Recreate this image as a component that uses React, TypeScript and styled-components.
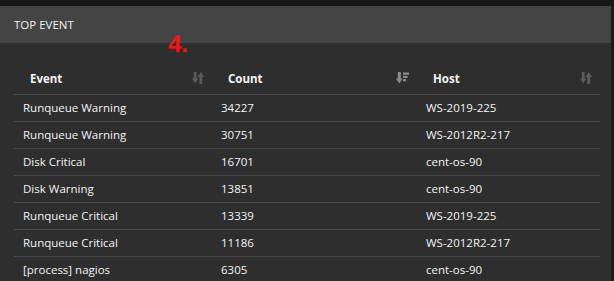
import React from "react";
import styled, { createGlobalStyle } from "styled-components";

const Global = createGlobalStyle`
  html, body { margin: 0; padding: 0; background: #1b1b1b; }
  body { font-family: "Open Sans", "Liberation Sans", sans-serif; overflow: hidden; }
`;

const Page = styled.div`
  width: 614px;
  height: 281px;
  display: flex;
  flex-direction: column;
  background: #1b1b1b;
  overflow: hidden;
`;

const TopBar = styled.div`
  height: 6px;
  background: #171717;
  flex: none;
`;

const Panel = styled.div`
  position: relative;
  width: 611px;
  flex: 1;
  background: #2e2e2e;
  display: flex;
  flex-direction: column;
`;

const PanelHeader = styled.div`
  height: 37px;
  background: #444444;
  display: flex;
  align-items: center;
  padding-left: 14px;
  color: #f2f2f2;
  font-size: 11.5px;
  flex: none;
`;

const Marker = styled.div`
  position: absolute;
  left: 168px;
  top: 26px;
  color: #ff1010;
  font-family: "Liberation Sans", Arial, sans-serif;
  font-weight: 700;
  font-size: 24px;
  line-height: 1;
`;

const Body = styled.div`
  padding: 17px 0 0 14px;
`;

const Table = styled.table`
  width: 586px;
  border-collapse: collapse;
  table-layout: fixed;
  color: #f4f4f4;
  font-size: 11.5px;
`;

const Th = styled.th<{ $w: number }>`
  width: ${(p) => p.$w}px;
  height: 34px;
  padding: 3px 8px 0 16px;
  text-align: left;
  font-weight: 700;
  border-bottom: 1px solid #4e4e4e;
  box-sizing: border-box;
`;

const ThInner = styled.div`
  display: flex;
  align-items: center;
  justify-content: space-between;
`;

const Td = styled.td`
  height: 26px;
  padding: 0 9px;
  border-bottom: 1px solid #484848;
  white-space: nowrap;
`;

const SortIcon = ({ active }: { active?: boolean }) =>
  active ? (
    <svg width="13" height="12" viewBox="0 0 13 12" fill="#8c8c8c">
      <rect x="1.8" y="0" width="3" height="7" />
      <polygon points="0,6.5 6.6,6.5 3.3,11.5" />
      <rect x="7" y="0.5" width="6" height="2.2" />
      <rect x="7" y="3.8" width="4.6" height="2.2" />
      <rect x="7" y="7.1" width="3.2" height="2.2" />
    </svg>
  ) : (
    <svg width="12" height="12" viewBox="0 0 12 12" fill="#5c5c5c">
      <rect x="1.8" y="0" width="2.8" height="7" />
      <polygon points="0,6.5 6.4,6.5 3.2,11.5" />
      <rect x="7.4" y="4.5" width="2.8" height="7.5" />
      <polygon points="5.6,5 12,5 8.8,0" />
    </svg>
  );

const rows = [
  ["Runqueue Warning", "34227", "WS-2019-225"],
  ["Runqueue Warning", "30751", "WS-2012R2-217"],
  ["Disk Critical", "16701", "cent-os-90"],
  ["Disk Warning", "13851", "cent-os-90"],
  ["Runqueue Critical", "13339", "WS-2019-225"],
  ["Runqueue Critical", "11186", "WS-2012R2-217"],
  ["[process] nagios", "6305", "cent-os-90"],
];

const cols: { label: string; w: number; active?: boolean }[] = [
  { label: "Event", w: 198 },
  { label: "Count", w: 205, active: true },
  { label: "Host", w: 183 },
];

export default function App() {
  return (
    <>
      <Global />
      <Page>
        <TopBar />
        <Panel>
          <PanelHeader>TOP EVENT</PanelHeader>
          <Marker>4.</Marker>
          <Body>
            <Table>
              <thead>
                <tr>
                  {cols.map((c) => (
                    <Th key={c.label} $w={c.w}>
                      <ThInner>
                        <span>{c.label}</span>
                        <SortIcon active={c.active} />
                      </ThInner>
                    </Th>
                  ))}
                </tr>
              </thead>
              <tbody>
                {rows.map((r, i) => (
                  <tr key={i}>
                    {r.map((v, j) => (
                      <Td key={j}>{v}</Td>
                    ))}
                  </tr>
                ))}
              </tbody>
            </Table>
          </Body>
        </Panel>
      </Page>
    </>
  );
}
